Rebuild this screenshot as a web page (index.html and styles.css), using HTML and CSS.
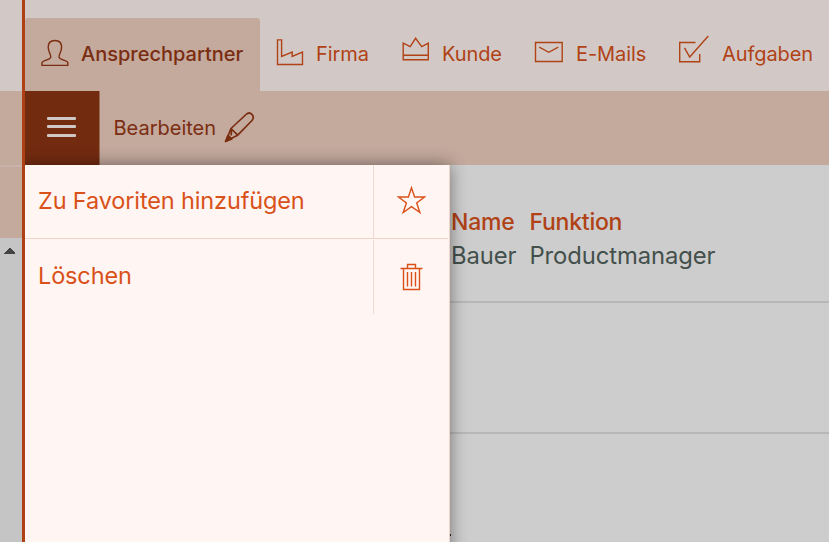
FILE: index.html
```html
<!DOCTYPE html>
<html lang="de">
<head>
<meta charset="utf-8">
<title>Ansprechpartner</title>
<link rel="stylesheet" href="styles.css">
</head>
<body>
<div class="app">
  <aside class="rail">
    <div class="rail-top"></div>
    <div class="rail-bar"></div>
    <div class="rail-sub"></div>
    <div class="rail-list"><svg class="arrow" viewBox="0 0 11 6" shape-rendering="crispEdges"><path d="M5 0h1l5 5v1H0V5z"/></svg></div>
  </aside>
  <main class="main">
    <nav class="tabs">
      <a class="tab tab-person active">
        <svg class="icon" viewBox="0 0 28 30"><path d="M1 26.4V23.7C1.5 21.2 9.6 21 9.8 18C10 15.500 7.200 12.500 7.200 8.200C7.200 3.500 9.800 1.500 13.900 1.500S20.600 3.500 20.600 8.200C20.600 12.500 17.800 15.500 18 18C18.200 21 26.300 21.200 26.800 23.700V26.400Z"/></svg>
        <span>Ansprechpartner</span>
      </a>
      <a class="tab tab-company">
        <svg class="icon" viewBox="0 0 28 30"><path d="M1.500 26.500V1.900H5.600V18.400L16.200 14.100V18.400L26.500 14V26.500Z"/></svg>
        <span>Firma</span>
      </a>
      <a class="tab tab-customer">
        <svg class="icon" viewBox="0 0 28 30"><path d="M1.200 20.700V4.200L8.200 7.700L13.600-.7L19.700 7.700L26.300 4.200V20.700ZM1.200 16.200H26.300"/></svg>
        <span>Kunde</span>
      </a>
      <a class="tab tab-mail">
        <svg class="icon" viewBox="0 0 28 30"><path d="M1.500 4.500H28.200V23.500H1.500ZM5.200 9.100L14.800 14.300L24.300 9.100"/></svg>
        <span>E-Mails</span>
      </a>
      <a class="tab tab-task">
        <svg class="icon" viewBox="0 0 28 30"><path d="M17.500 4.500H1.700V23.700H21.700V16M6.500 9.800L11.700 19L30.300-2"/></svg>
        <span>Aufgaben</span>
      </a>
    </nav>
    <div class="toolbar">
      <button class="menu-button" aria-label="Menü"><i></i><i></i><i></i></button>
      <a class="edit"><span>Bearbeiten</span>
        <svg class="pencil" viewBox="0 0 32 32"><path d="M2 29L7 16.500L22 2.500C26.300-1.400 31.500 3.900 28 8.500L13.700 23.200L2 29M7 16.500L13.700 23.200M7.200 23.500L7.500 18"/><path class="fill" d="M1.500 29.500L4 23.300L7.800 27Z"/></svg>
      </a>
    </div>
    <section class="content">
      <div class="record">
        <div class="field name"><b>Name</b><span>Bauer</span></div>
        <div class="field"><b>Funktion</b><span>Productmanager</span></div>
      </div>
      <div class="block"></div>
      <div class="block last"><i class="tick"></i></div>
    </section>
    <div class="popup">
      <div class="row">
        <div class="label">Zu Favoriten hinzufügen</div>
        <div class="action"><svg class="action-icon" viewBox="0 0 30 30"><path d="M15.500 2.700L18.600 12H28.500L20.700 17.900L23.900 27.500L15.500 21.700L7.200 27.500L10.400 17.900L2.500 12H12.400Z"/></svg></div>
      </div>
      <div class="row">
        <div class="label">Löschen</div>
        <div class="action"><svg class="action-icon" viewBox="0 0 30 30"><path d="M4.500 6.500H26.500M11.500 6.500V2.500H19.500V6.500M7.500 6.500V27.500H23.500V6.500M11.500 10V24.500M15.500 10V24.500M19.500 10V24.500"/></svg></div>
      </div>
    </div>
  </main>
</div>
</body>
</html>
```

FILE: styles.css
```css
* { box-sizing: border-box; }
body { margin: 0; font-family: Inter, sans-serif; font-size: 20px; color: #b04216; }
.app { display: flex; width: 829px; height: 542px; overflow: hidden; background: #cdcdcd; }
.rail { width: 25px; flex: none; display: flex; flex-direction: column; border-right: 3px solid #ae4015; background: #c5c5c5; }
.rail-top { height: 91px; background: #d2c9c7; }
.rail-bar { height: 74px; background: #c4a99d; }
.rail-sub { height: 73px; border-top: 2px solid #c9b2aa; background: #c4a99d; }
.rail-list { flex: 1; padding: 10px 0 0 4px; }
.arrow { display: block; width: 11px; height: 6px; fill: #444; }
.main { position: relative; flex: 1; min-width: 0; display: flex; flex-direction: column; overflow: hidden; }
.tabs { height: 91px; flex: none; display: flex; padding-top: 18px; background: #d2c9c7; }
.tab { flex: none; display: flex; align-items: center; gap: 12px; padding-left: 16px; white-space: nowrap; letter-spacing: -.08px; }
.tab span { padding-bottom: 2px; font-weight: 400; }
.tab-person { width: 235px; }
.tab-company { width: 126px; }
.tab-customer { width: 132px; }
.tab-mail { width: 144px; gap: 14px; }
.tab-task { gap: 16px; }
.active { background: #c4a99d; border-radius: 3px 3px 0 0; color: #7a2d10; }
.tab.active span { font-weight: 550; letter-spacing: 0; }
.icon { width: 28px; height: 30px; flex: none; overflow: visible; fill: none; stroke: currentColor; stroke-width: 1.4; }
.tab .icon { margin-top: -3px; }
.tab-person .icon, .tab-customer .icon { margin-top: -1px; }
.toolbar { height: 74px; flex: none; display: flex; background: #c4a99d; color: #7a2d10; }
.menu-button { width: 75px; padding: 25.500px 0 0 22px; border: 0; border-right: 1px solid #9b6a56; background: #732b10; display: flex; flex-direction: column; gap: 5.500px; }
.menu-button i { width: 29px; height: 3px; border-radius: 1px; background: #d0c8c5; }
.edit { display: flex; align-items: center; gap: 8px; padding-left: 13.500px; }
.pencil { width: 32px; height: 32px; margin-top: -1px; overflow: visible; fill: none; stroke: currentColor; stroke-width: 1.7; stroke-linejoin: round; }
.pencil .fill { fill: currentColor; }
.content { flex: 1; display: flex; flex-direction: column; }
.record { height: 138px; display: flex; padding: 40px 0 0 426px; border-bottom: 2px solid #b7b7b7; line-height: 34px; }
.field { display: flex; flex-direction: column; }
.field b { font-size: 23px; font-weight: 500; letter-spacing: -.25px; }
.field span { color: #43504c; font-size: 23.800px; letter-spacing: -.08px; }
.field.name { width: 78.500px; }
.block { height: 131px; border-bottom: 2px solid #b7b7b7; }
.last { flex: 1; border: 0; padding: 100px 0 0 425px; }
.tick { display: block; width: 1px; height: 2px; background: #222; }
.popup { position: absolute; left: 0; top: 165px; width: 425px; height: 451px; background: #fff5f2; border-right: 1px solid #edd3ca; box-shadow: 0 0 16px rgba(0, 0, 0, .45); color: #d95119; font-size: 23.500px; letter-spacing: -.14px; }
.row { display: flex; height: 74px; margin-right: 1px; }
.row:first-child { margin-bottom: 1px; border-bottom: 1px solid #f2d4c8; }
.label { width: 349px; display: flex; align-items: center; padding: 0 0 2px 13px; border-right: 1px solid #f0d9d1; }
.action { flex: 1; display: flex; align-items: center; justify-content: center; padding-bottom: 3px; }
.row:last-child .label { padding-bottom: 3px; }
.row:last-child .action { padding-bottom: 0; }
.action-icon { width: 30px; height: 30px; fill: none; stroke: currentColor; stroke-width: 1.4; }
```
